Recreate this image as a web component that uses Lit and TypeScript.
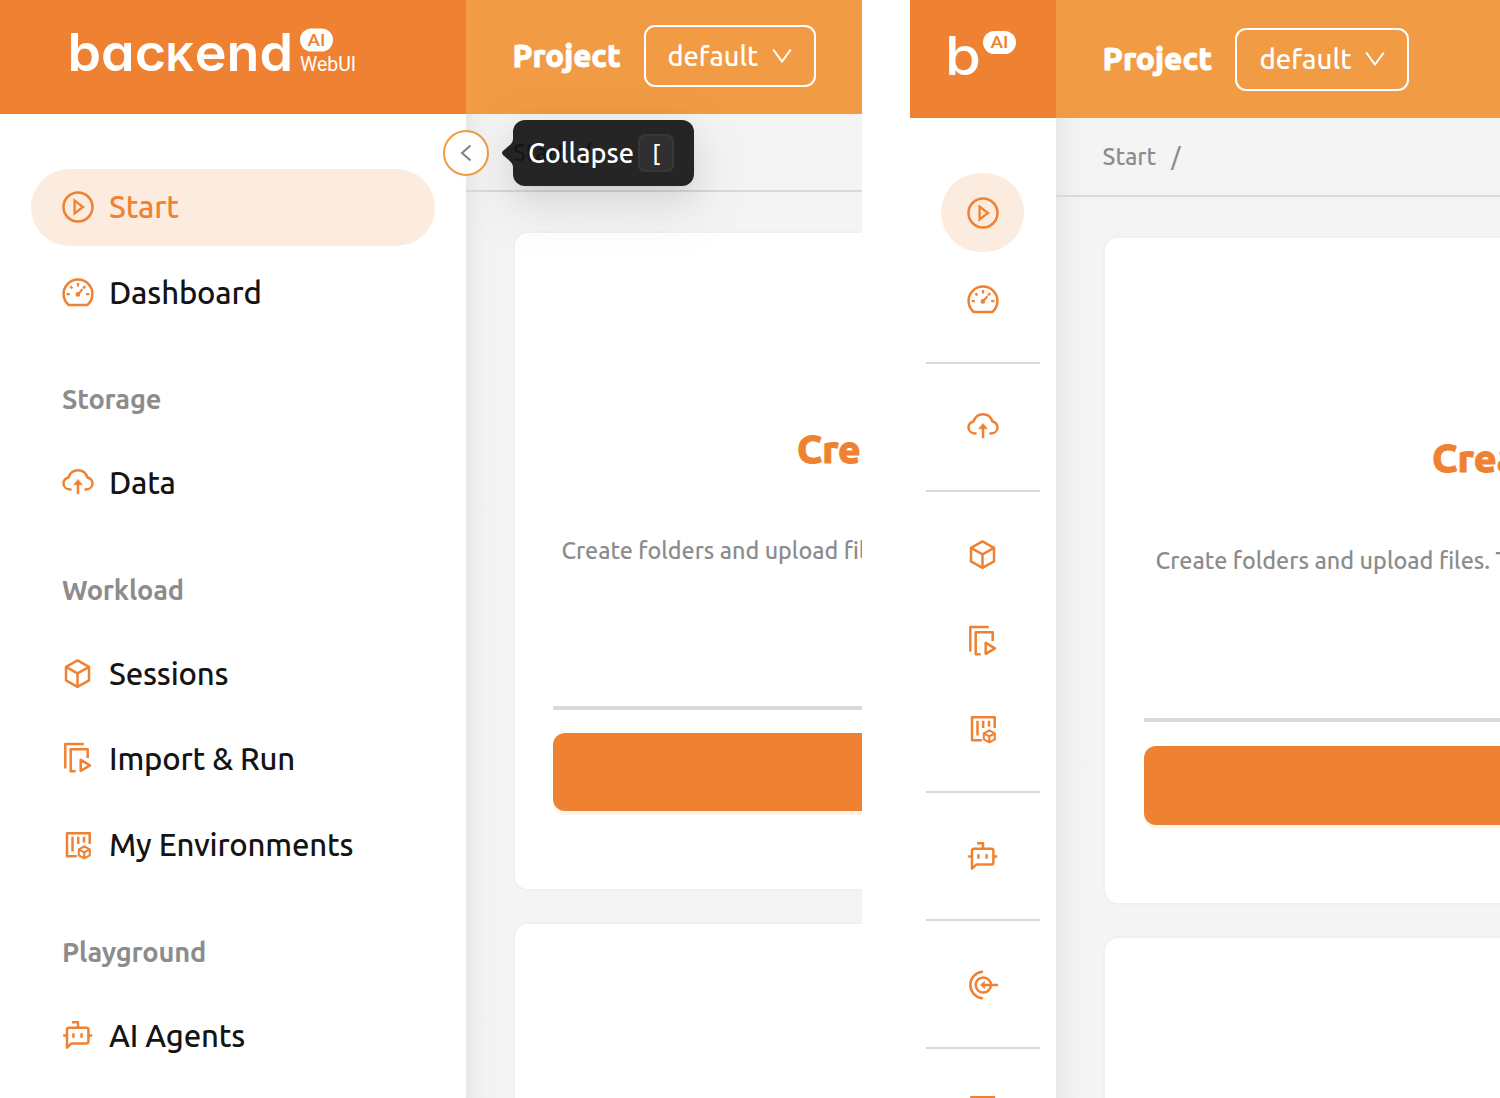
import { LitElement, html, svg, css, TemplateResult } from "lit";
import { customElement, property } from "lit/decorators.js";
import { classMap } from "lit/directives/class-map.js";

const icons: Record<string, TemplateResult> = {
  start: svg`<circle cx="16" cy="16" r="14.5"/><path d="M12.6 9.600v12.800l8.400-6.400z" stroke-width="2.300" stroke-linejoin="miter"/>`,
  dashboard: svg`<path d="M6.8 28.1A14.4 14.4 0 1 1 25.2 28.1Z"/><path stroke-width="2.2" d="M16 6v3.4M4.6 17.2h3.2M24.2 17.2h3.2M8.4 9.4l2 2M23.3 9l-2.3 2.4M20.4 12.2L16 17.4"/><circle cx="15.9" cy="17.4" r="1.1"/>`,
  data: svg`<path stroke-linecap="round" d="M8.6 22.5C4.6 22.5 1.5 20 1.5 16.4c0-3.2 2-5 5-5.9C8 6 11.5 3.2 16 3.2s8 2.8 9.5 7.3c3 .9 5 2.7 5 5.9 0 3.6-3.1 6.1-7.1 6.1"/><path d="M16 27.2V15"/><path class="solid" d="M11.7 17.8L16 12.4l4.3 5.4z"/>`,
  sessions: svg`<path d="M15.5 2.4L27 8.8v13.6l-11.5 6.4L4 22.4V8.8zM4 8.8l11.5 6.5L27 8.8M15.5 15.3v13.5"/>`,
  run: svg`<path d="M3.3 25.6V1H21.8M13.6 28.2H8.7V6.2H25.7V15"/><path d="M18.7 16.9v10.9l9.3-5.4z"/>`,
  env: svg`<path d="M14.8 27.3H5V4.3H27.7V15M10.5 7.8v14.8M16.2 7.8V15M22 7.8v5.8"/><path stroke-width="2.1" d="M22.3 17.3l5.5 3v6.1l-5.5 3-5.5-3v-6.1zM16.8 20.3l5.5 3 5.5-3M22.3 23.3v6"/>`,
  agents: svg`<path d="M5 27.7V9.6a2 2 0 0 1 2-1.9H24.4a2 2 0 0 1 2 2V21.4a2 2 0 0 1-2 2H9.6zM16 7.7V2.3H10M1.2 15.4H5M26.4 15.4h3.8"/><path d="M11.4 13.2v4.6M19.6 13.2v4.6"/>`,
  entry: svg`<path stroke-linecap="round" d="M15 2.8A13.3 13.3 0 0 0 15 29.2"/><circle cx="16.3" cy="16" r="7.6"/><path d="M31 16H15"/><path class="solid" d="M13.4 16l4.2-3.6v7.2z"/>`,
  board: svg`<path d="M4.4 1.3H27V28H4.4z"/>`,
};

@customElement("nav-icon")
class NavIcon extends LitElement {
  @property() name = "";
  static styles = css`
    :host { display: block; flex: none; width: 32px; height: 32px; }
    .glyph { display: block; overflow: visible; fill: none; stroke: #ef8232; stroke-width: 2.5; stroke-linejoin: round; }
    .solid { fill: #ef8232; stroke-width: 0.6; }
  `;
  render() {
    return html`<svg class="glyph" width="32" height="32" viewBox="0 0 32 32">${icons[this.name]}</svg>`;
  }
}

type Entry = { icon: string; label: string; active?: boolean };
type Group = { title?: string; entries: Entry[] };

const groups: Group[] = [
  { entries: [
    { icon: "start", label: "Start", active: true },
    { icon: "dashboard", label: "Dashboard" },
  ] },
  { title: "Storage", entries: [{ icon: "data", label: "Data" }] },
  { title: "Workload", entries: [
    { icon: "sessions", label: "Sessions" },
    { icon: "run", label: "Import & Run" },
    { icon: "env", label: "My Environments" },
  ] },
  { title: "Playground", entries: [{ icon: "agents", label: "AI Agents" }] },
];

const rail: string[][] = [
  ["start", "dashboard"], ["data"], ["sessions", "run", "env"], ["agents"], ["entry"], ["board"],
];

@customElement("app-root")
class AppRoot extends LitElement {
  static styles = css`
    :host {
      display: block; width: 1500px; height: 1098px; overflow: hidden; background: #fff;
      font-family: Ubuntu, "Noto Sans", sans-serif; font-weight: 500; color: #141414; white-space: nowrap;
    }
    .stage { display: grid; grid-template-columns: 862px 590px; column-gap: 48px; height: 1098px; }
    .pane { display: grid; overflow: hidden; height: 1098px; position: relative; }
    .wide { grid-template: 114px 984px / 466px 396px; }
    .slim { grid-template: 118px 980px / 145.600px 444.400px; }
    .brand { background: #ef8232; overflow: hidden; }
    .brand svg { display: block; }
    .word { font-family: Inter, sans-serif; font-weight: 600; fill: #fff; font-feature-settings: "cv11" 1; }
    .mark { font-weight: 500; }
    .small-k { text-transform: uppercase; font-size: 38.500px; font-weight: 700; }
    .chip { fill: #fff; }
    .chip-text { font-family: Roboto, sans-serif; font-weight: 500; fill: #ef8232; }
    .product { font-family: Roboto, sans-serif; font-weight: 400; fill: #fff; }
    .top { background: #f19c45; display: flex; align-items: center; color: #fff; box-sizing: border-box; }
    .wide .top { padding: 0 0 2px 46.500px; }
    .slim .top { padding-left: 47px; }
    .project { width: 131px; font-weight: 800; font-size: 31.100px; line-height: 40px; -webkit-text-stroke: 0.8px #fff; }
    .slim .project { width: 132.9px; font-size: 31.500px; }
    .select {
      box-sizing: border-box; width: 172px; height: 62px; border: 2px solid #fff; border-radius: 11px;
      display: flex; align-items: center; justify-content: space-between; padding: 0 22px 0 22px;
      font-size: 27.200px; line-height: 36px;
    }
    .slim .select { width: 174px; height: 63px; font-size: 27.600px; }
    .caret { fill: none; stroke: #fff; stroke-width: 2; }
    .side { padding: 54.500px 31px 0; background: #fff; }
    .entry {
      display: flex; align-items: center; gap: 15px; height: 77.7px; margin-bottom: 7.8px;
      padding-left: 31px; border-radius: 39px; font-size: 31.100px; line-height: 42px; letter-spacing: -0.180px;
    }
    .entry.active { background: #fcebdf; color: #ef8232; }
    .heading {
      height: 105.1px; box-sizing: border-box; padding: 41px 0 0 31px; letter-spacing: -0.180px;
      font-size: 27.200px; line-height: 38px; font-weight: 700; color: #8c8c8c;
    }
    .rail { padding-top: 55px; background: #fff; display: flex; flex-direction: column; }
    .stop {
      flex: none; width: 83px; height: 79.1px; margin: 0 auto 7.9px; border-radius: 40px;
      display: flex; align-items: center; justify-content: center;
    }
    .stop.active { background: #fcebdf; }
    .rule { flex: none; height: 2px; margin: 14.900px 16px 23.9px; background: #d9d9d9; }
    .body {
      background: linear-gradient(to right, #e7e7e7 0, #eeeeee 9px, #f2f2f2 19px, #f4f4f4 32px);
      display: flex; flex-direction: column; min-width: 0; overflow: hidden;
    }
    .crumbs {
      flex: none; box-sizing: border-box; height: 78px; border-bottom: 2px solid #d9d9d9;
      display: flex; align-items: center; gap: 15px; padding: 0 0 1px 47px;
      font-size: 23.600px; line-height: 32px; color: #8c8c8c;
    }
    .slim .crumbs { height: 79px; }
    .card {
      flex: none; box-sizing: border-box; background: #fff; border: 2px solid #f0f0f0;
      border-radius: 15px; width: 700px; margin-left: 47px;
      display: flex; flex-direction: column; align-items: flex-start;
    }
    .wide .card { height: 660px; margin-top: 39px; }
    .wide .card.next { margin-top: 31px; }
    .slim .card { height: 669px; margin-top: 39px; }
    .slim .card.next { margin-top: 31px; }
    .title { color: #ef8232; font-weight: 800; font-size: 38.8px; line-height: 50px; -webkit-text-stroke: 1px #ef8232; }
    .wide .title { margin: 191px 0 0 282px; }
    .slim .title { margin: 193.500px 0 0 327.500px; font-size: 39.300px; }
    .text { color: #8c8c8c; font-size: 23.300px; line-height: 32px; }
    .wide .text { margin: 59.5px 0 0 46.500px; }
    .slim .text { margin: 62.500px 0 0 51px; font-size: 23.400px; }
    .line { width: 640px; height: 4px; background: #d9d9d9; }
    .wide .line { margin: 140.500px 0 0 38px; }
    .slim .line { margin: 142px 0 0 39px; }
    .cta { width: 640px; border-radius: 12px; background: #ef8232; box-shadow: 0 4px 0 #fff5e8; }
    .wide .cta { height: 78px; margin: 23px 0 0 38px; }
    .slim .cta { height: 79px; margin: 23.500px 0 0 39px; }
    .toggle {
      position: absolute; left: 443px; top: 130px; width: 46px; height: 46px; box-sizing: border-box;
      border: 2px solid #f19c45; border-radius: 50%; background: #fff;
      display: flex; align-items: center; justify-content: center;
    }
    .toggle svg { fill: none; stroke: #808080; stroke-width: 2; }
    .tip {
      position: absolute; left: 512.500px; top: 120px; width: 181px; height: 66px; box-sizing: border-box;
      border-radius: 12px; background: rgba(0, 0, 0, 0.85); color: #fff;
      display: flex; align-items: center; padding-left: 15.500px; font-size: 27.100px; line-height: 36px;
      box-shadow: 0 12px 32px rgba(0, 0, 0, 0.08), 0 6px 12px -8px rgba(0, 0, 0, 0.12), 0 18px 56px 16px rgba(0, 0, 0, 0.05);
    }
    .arrow { position: absolute; left: -11px; top: 19px; fill: rgba(0, 0, 0, 0.85); }
    .word-tip { width: 110px; }
    .key {
      box-sizing: border-box; width: 36px; height: 38px; border: 2px solid #383838; border-radius: 7px;
      background: #303030; display: flex; align-items: center; justify-content: center;
      font-size: 23px; line-height: 28px;
    }
  `;

  private top() {
    return html`<div class="top">
      <span class="project">Project</span>
      <div class="select">
        <span>default</span>
        <svg class="caret" width="20" height="16" viewBox="0 0 20 16"><path d="M1.2 1.5L10 13.6l8.8-12.1"/></svg>
      </div>
    </div>`;
  }

  private body(title: string, text: string) {
    return html`<div class="body">
      <div class="crumbs"><span>Start</span><span>/</span></div>
      <div class="card">
        <span class="title">${title}</span>
        <span class="text">${text}</span>
        <div class="line"></div>
        <div class="cta"></div>
      </div>
      <div class="card next"></div>
    </div>`;
  }

  render() {
    return html`<div class="stage">
      <section class="pane wide">
        <div class="brand">
          <svg width="466" height="114" viewBox="0 0 466 114">
            <text class="word" x="67.500" y="71" font-size="52" textLength="225.500" lengthAdjust="spacingAndGlyphs">bac<tspan class="small-k">k</tspan>end</text>
            <rect class="chip" x="300" y="28.5" width="33" height="23" rx="11.5"/>
            <text class="chip-text" x="307.5" y="45.6" font-size="17" textLength="18" lengthAdjust="spacingAndGlyphs">AI</text>
            <text class="product" x="300" y="71.3" font-size="20" textLength="56" lengthAdjust="spacingAndGlyphs">WebUI</text>
          </svg>
        </div>
        ${this.top()}
        <nav class="side">
          ${groups.map((g) => html`
            ${g.title ? html`<div class="heading">${g.title}</div>` : null}
            ${g.entries.map((e) => html`<div class=${classMap({ entry: true, active: !!e.active })}>
              <nav-icon .name=${e.icon}></nav-icon>
              <span>${e.label}</span>
            </div>`)}
          `)}
        </nav>
        ${this.body("Cre", "Create folders and upload fil")}
        <div class="toggle"><svg width="12" height="18" viewBox="0 0 12 18"><path d="M10.5 1.5L2 9l8.5 7.5"/></svg></div>
        <div class="tip">
          <svg class="arrow" width="11" height="28" viewBox="0 0 11 28"><path d="M11 0C11 3 9 5 7 6.800L1.200 11.800Q-1.200 14 1.200 16.200L7 21.200C9 23 11 25 11 28z"/></svg>
          <span class="word-tip">Collapse</span>
          <span class="key">[</span>
        </div>
      </section>
      <section class="pane slim">
        <div class="brand">
          <svg width="146" height="118" viewBox="0 0 146 118">
            <text class="word mark" x="35" y="74.500" font-size="53" textLength="36" lengthAdjust="spacingAndGlyphs">b</text>
            <rect class="chip" x="73" y="31" width="33" height="23" rx="11.5"/>
            <text class="chip-text" x="80.500" y="48.100" font-size="17" textLength="18" lengthAdjust="spacingAndGlyphs">AI</text>
          </svg>
        </div>
        ${this.top()}
        <nav class="rail">
          ${rail.map((names, i) => html`
            ${i ? html`<div class="rule"></div>` : null}
            ${names.map((n) => html`<div class=${classMap({ stop: true, active: n === "start" })}><nav-icon .name=${n}></nav-icon></div>`)}
          `)}
        </nav>
        ${this.body("Crea", "Create folders and upload files. T")}
      </section>
    </div>`;
  }
}
